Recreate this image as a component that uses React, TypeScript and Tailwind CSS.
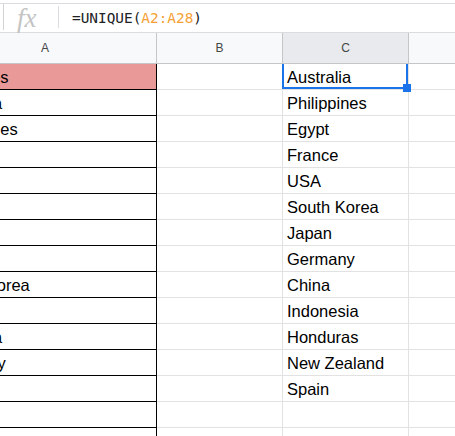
import React from "react";

const aText = [
  "Countries",
  "Australia",
  "Philippines",
  "Egypt",
  "France",
  "USA",
  "Egypt",
  "Japan",
  "South Korea",
  "China",
  "Australia",
  "Germany",
  "",
  "",
  "",
];

const cText = [
  "Australia",
  "Philippines",
  "Egypt",
  "France",
  "USA",
  "South Korea",
  "Japan",
  "Germany",
  "China",
  "Indonesia",
  "Honduras",
  "New Zealand",
  "Spain",
  "",
  "",
];

const cellFont = { fontFamily: '"Liberation Sans", Arial, sans-serif' };

function Row({ a, c, first }: { a: string; c: string; first: boolean }) {
  return (
    <div className="flex h-[26px] shrink-0">
      <div
        className={`w-[157px] shrink-0 overflow-hidden border-r border-b border-black flex items-end pb-[2px] ${
          first ? "bg-[#ea9999]" : "bg-white"
        }`}
      >
        <div className="-ml-[66px] pl-[4px] whitespace-nowrap text-[16.5px] leading-[19px] text-black">
          {a}
        </div>
      </div>
      <div className="w-[126px] shrink-0 border-r border-b border-[#e2e2e2]" />
      <div className="w-[126px] shrink-0 border-r border-b border-[#e2e2e2] flex items-end pb-[2px] overflow-hidden">
        <div className="pl-[4px] whitespace-nowrap text-[16.5px] leading-[19px] text-black">
          {c}
        </div>
      </div>
      <div className="flex-1 border-b border-[#e2e2e2]" />
    </div>
  );
}

export default function App() {
  return (
    <div
      className="relative w-[455px] h-[436px] overflow-hidden bg-white"
      style={cellFont}
    >
      {/* formula bar */}
      <div className="pt-[3px] bg-white">
        <div className="h-[30px] border-t border-b border-[#dadce0] flex items-start">
          <div className="ml-[3px] w-px h-[26px] bg-[#d3d3d3]" />
          <div className="w-[54px] h-[28px] flex items-center pl-[13px]">
            <span
              className="text-[27px] leading-[26px] text-[#c4c4c4] italic"
              style={{ fontFamily: '"Liberation Serif", "Times New Roman", serif' }}
            >
              fx
            </span>
          </div>
          <div className="mt-[2px] w-px h-[22px] bg-[#dadce0]" />
          <div
            className="ml-[13px] h-[28px] flex items-center text-[14.4px] leading-[18px] text-[#202124]"
            style={{ fontFamily: '"DejaVu Sans Mono", "Liberation Mono", monospace' }}
          >
            <span>=UNIQUE(</span>
            <span className="text-[#f6a137]">A2:A28</span>
            <span>)</span>
          </div>
        </div>
      </div>

      {/* column header */}
      <div className="relative z-10 flex h-[31px] border-b border-[#c4c7c5] bg-[#f8f9fa] text-[12px] text-[#444746]">
        <div className="w-[157px] shrink-0 overflow-hidden border-r border-[#c4c7c5] flex items-center">
          <div className="-ml-[66px] w-[222px] shrink-0 text-center">A</div>
        </div>
        <div className="w-[126px] shrink-0 border-r border-[#c4c7c5] flex items-center justify-center">
          B
        </div>
        <div className="w-[126px] shrink-0 border-r border-[#c4c7c5] bg-[#e8eaed] flex items-center justify-center">
          C
        </div>
        <div className="flex-1" />
      </div>

      {/* grid */}
      <div className="flex flex-col">
        {aText.map((a, i) => (
          <Row key={i} a={a} c={cText[i]} first={i === 0} />
        ))}
      </div>

      {/* selection */}
      <div className="absolute left-[282px] top-[62px] w-[126px] h-[27px] border-2 border-[#1a73e8] z-[5] pointer-events-none" />
      <div className="absolute left-[403px] top-[84px] w-[8px] h-[8px] bg-[#1a73e8] z-[6]" />
    </div>
  );
}
